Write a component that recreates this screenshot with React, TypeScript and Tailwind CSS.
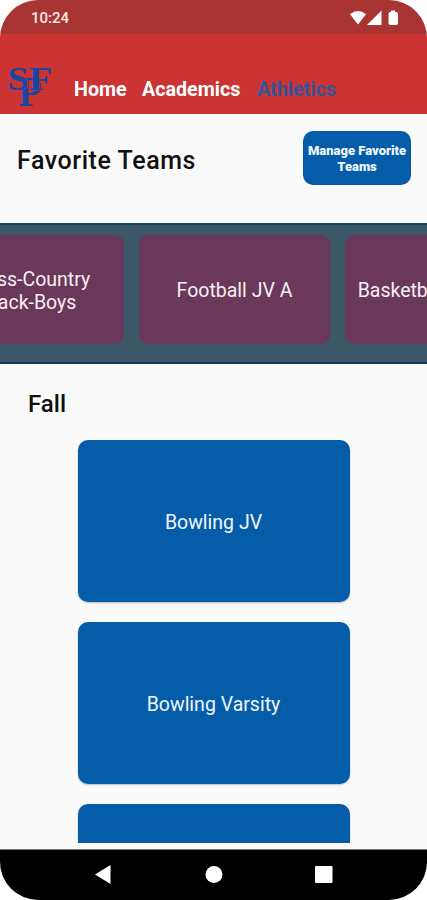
import React from "react";

function SchoolLogo() {
  return (
    <svg width="44" height="42" viewBox="0 0 44 42" className="shrink-0 overflow-visible" fill="#1846a3" fontFamily="Liberation Serif, serif" fontWeight="700">
      <text x="9.500" y="38.500" fontSize="42" textLength="23" lengthAdjust="spacingAndGlyphs">P</text>
      <text x="-1.500" y="22.500" fontSize="33" textLength="21" lengthAdjust="spacingAndGlyphs" stroke="#cc3333" strokeWidth="1" paintOrder="stroke">S</text>
      <text x="20" y="22.500" fontSize="34" textLength="23" lengthAdjust="spacingAndGlyphs" stroke="#cc3333" strokeWidth="1" paintOrder="stroke">F</text>
    </svg>
  );
}

function StatusIcons() {
  return (
    <svg width="50" height="16" viewBox="0 0 50 16" fill="#fff">
      <path d="M0 4.2 Q8-2.200 16 4.2 L8 14.5Z" />
      <path d="M31.500 0.5V15H17Z" />
      <path d="M41 0.500H45V2H46Q48 2 48 4V13.2Q48 15 46.2 15H40.3Q38.500 15 38.500 13.2V4Q38.500 2 40.500 2H41Z" />
    </svg>
  );
}

function FavoriteCard({ lines }: { lines: string[] }) {
  return (
    <div className="flex h-[109px] w-[191px] shrink-0 flex-col items-center justify-center rounded-[9px] bg-[#6a3858] pt-[2px] text-[19.5px] leading-[23px] text-[#f8eff5]">
      {lines.map((line) => (
        <span key={line} className="whitespace-nowrap">{line}</span>
      ))}
    </div>
  );
}

function TeamCard({ name }: { name: string }) {
  return (
    <div className="flex h-[162px] w-[272px] shrink-0 items-center justify-center rounded-[10px] bg-[#055daa] pt-[3px] text-[19.5px] text-[#f2f7ff] shadow-[0_1px_2px_#00000040]">
      {name}
    </div>
  );
}

export default function App() {
  return (
    <div className="h-[900px] w-[427px] overflow-hidden bg-white font-['Roboto',sans-serif]">
      <div className="flex h-full flex-col overflow-hidden rounded-[38px] bg-[#fafafa]">
        <div className="flex h-[34px] shrink-0 items-center justify-between bg-[#a93434] pl-[31px] pr-[27px] pt-[2px] text-[15px] font-medium text-[#ffeaea]">
          <span>10:24</span>
          <StatusIcons />
        </div>
        <header className="flex h-[80px] shrink-0 items-end bg-[#cc3333] pl-[9px] text-[19.7px] font-bold leading-6 text-white">
          <div className="mb-[5px]"><SchoolLogo /></div>
          <nav className="mb-[12px] ml-[21px] flex gap-[16px]">
            <span className="w-[52px]">Home</span>
            <span className="w-[99px]">Academics</span>
            <span className="text-[#35569b]">Athletics</span>
          </nav>
        </header>
        <section className="flex h-[109px] shrink-0 items-start justify-between pl-[17px] pr-[16px] pt-[17px]">
          <h1 className="mt-[14px] text-[25px] font-medium leading-[32px] tracking-[0.55px] text-[#111]">Favorite Teams</h1>
          <button className="h-[54px] w-[108px] rounded-[10px] bg-[#055daa] pt-[2px] text-[13px] font-black leading-[16px] text-[#eef6ff]">
            <span className="-mx-[2px] block whitespace-nowrap">Manage Favorite</span>
            <span className="block">Teams</span>
          </button>
        </section>
        <section className="h-[141px] shrink-0 overflow-hidden border-y-2 border-t-[#12475d] border-b-[#12385a] bg-[#3b5768] pt-[10px]">
          <div className="-ml-[67px] flex gap-[15px]">
            <FavoriteCard lines={["Cross-Country", "Track-Boys"]} />
            <FavoriteCard lines={["Football JV A"]} />
            <FavoriteCard lines={["Basketball JV-Boys"]} />
          </div>
        </section>
        <h2 className="mt-[24px] shrink-0 pl-[28px] text-[24px] font-medium leading-[32px] text-[#111]">Fall</h2>
        <main className="mt-[20px] flex h-[403px] shrink-0 flex-col items-center gap-[20px] overflow-hidden">
          <TeamCard name="Bowling JV" />
          <TeamCard name="Bowling Varsity" />
          <TeamCard name="Cheerleading" />
        </main>
        <div className="h-[6px] shrink-0" />
        <footer className="flex min-h-0 flex-1 items-center justify-center border-t border-[#777] bg-black">
          <svg width="240" height="22" viewBox="0 0 240 22" fill="#fff">
            <path d="M1 10.500L16.500 1V20Z" />
            <circle cx="120" cy="10.500" r="8.500" />
            <rect x="221" y="2" width="17.500" height="17" rx="1" />
          </svg>
        </footer>
      </div>
    </div>
  );
}
